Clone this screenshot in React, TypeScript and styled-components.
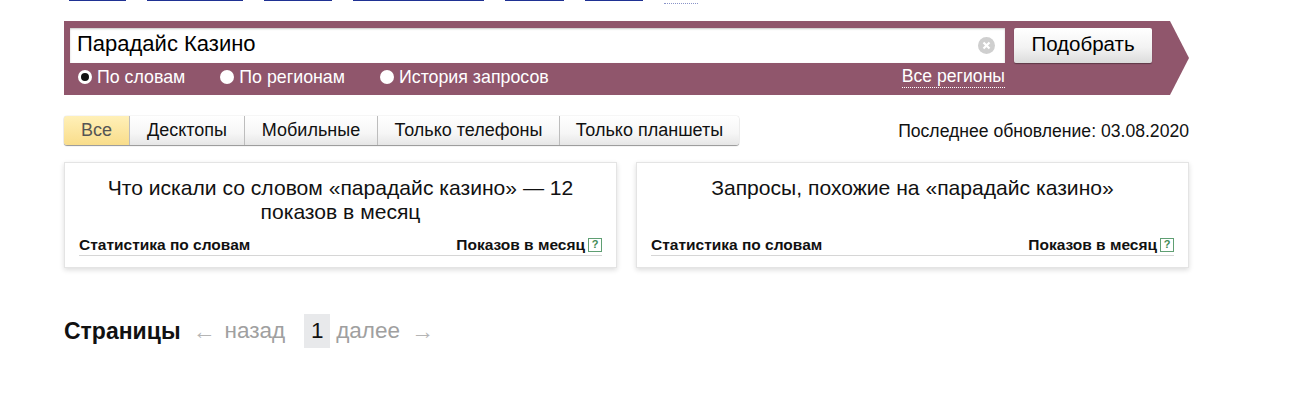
import styled, { createGlobalStyle } from 'styled-components';

const GlobalStyle = createGlobalStyle`
  html, body {
    margin: 0;
    padding: 0;
    background: #fff;
    overflow: hidden;
  }

  body {
    font-family: 'Liberation Sans', Arial, sans-serif;
    color: #000;
  }
`;

const Page = styled.div`
  width: 1125px;
  padding-left: 64px;
`;

const TopNav = styled.nav`
  height: 5px;
  padding-left: 5px;
  display: flex;
  align-items: flex-start;
  gap: 21px;
  overflow: hidden;
`;

const TopLink = styled.a<{ $width: number; $dotted?: boolean }>`
  flex: none;
  width: ${(p) => p.$width}px;
  margin-top: ${(p) => (p.$dotted ? 3 : 0)}px;
  border-bottom: 1px ${(p) => (p.$dotted ? 'dotted #8a94c8' : 'solid #1f3193')};
`;

const SearchBand = styled.form`
  margin-top: 16px;
  height: 74px;
  box-sizing: border-box;
  padding: 7px 37px 0 6px;
  background: #90566c;
  clip-path: polygon(0 0, 1106px 0, 1125px 37px, 1106px 100%, 0 100%);
  display: grid;
  grid-template-columns: 935px 138px;
  grid-template-rows: 35px 1fr;
  column-gap: 9px;
`;

const QueryBox = styled.div`
  background: #fff;
  display: flex;
  align-items: center;
  justify-content: space-between;
  padding: 0 10px 3px 7px;
  box-shadow: inset 0 1px 2px rgba(0, 0, 0, 0.22);
  font-size: 22px;
`;

const ClearIcon = styled.svg`
  width: 17px;
  height: 17px;
  flex: none;
  margin-top: 3px;
`;

const SubmitButton = styled.button`
  border: 0;
  padding: 0 0 4px;
  border-radius: 2px;
  background: linear-gradient(#fff, #f3f3f3 55%, #dcdcdc);
  box-shadow: 0 1px 1px rgba(0, 0, 0, 0.35);
  font: 20.5px 'Liberation Sans', Arial, sans-serif;
  color: #000;
`;

const SearchOptions = styled.div`
  display: flex;
  align-items: center;
  justify-content: space-between;
  padding: 0 0 4px 8px;
`;

const RadioGroup = styled.div`
  display: flex;
  gap: 35px;
`;

const RadioOption = styled.label`
  display: flex;
  align-items: center;
  gap: 5px;
  font-size: 17.8px;
  color: #fff;
`;

const RadioDot = styled.span<{ $checked?: boolean }>`
  width: 14px;
  height: 14px;
  box-sizing: border-box;
  border-radius: 50%;
  background: ${(p) => (p.$checked ? '#111' : '#fff')};
  border: ${(p) => (p.$checked ? '3.5px solid #fff' : '0')};
`;

const RegionsLink = styled.a`
  font-size: 17.6px;
  line-height: 21px;
  color: #fff;
  border-bottom: 1px dotted #fff;
`;

const TabsRow = styled.div`
  margin-top: 21px;
  display: flex;
  align-items: center;
  justify-content: space-between;
`;

const Tabs = styled.div`
  display: flex;
  height: 29px;
  border-radius: 3px;
  box-shadow: 0 1px 1px rgba(0, 0, 0, 0.4), 0 0 1px rgba(0, 0, 0, 0.35);
`;

const Tab = styled.div<{ $active?: boolean; $width: number }>`
  width: ${(p) => p.$width}px;
  box-sizing: border-box;
  display: flex;
  align-items: center;
  justify-content: center;
  font-size: 18px;
  color: ${(p) => (p.$active ? '#555' : '#111')};
  background: ${(p) =>
    p.$active
      ? 'linear-gradient(#fff0b8, #f9dd8b)'
      : 'linear-gradient(#fff, #f6f6f6 60%, #e6e6e6)'};
  border-left: ${(p) => (p.$active ? '0' : '1px solid #bdbdbd')};
  border-radius: ${(p) => (p.$active ? '3px 0 0 3px' : '0')};

  &:last-child {
    border-radius: 0 3px 3px 0;
  }
`;

const UpdatedAt = styled.div`
  padding-top: 2px;
  font-size: 17.6px;
  color: #111;
`;

const Cards = styled.div`
  margin-top: 17px;
  display: grid;
  grid-template-columns: 553px 553px;
  column-gap: 19px;
`;

const Card = styled.section`
  height: 106px;
  box-sizing: border-box;
  padding: 13px 14px 11px;
  display: flex;
  flex-direction: column;
  border: 1px solid #e4e4e4;
  box-shadow: 0 2px 5px rgba(0, 0, 0, 0.14);
`;

const CardTitle = styled.h2`
  flex: 1;
  margin: 0;
  padding: 0 24px;
  text-align: center;
  font-size: 21.1px;
  font-weight: 400;
  line-height: 24px;
  color: #111;
`;

const CardHead = styled.div`
  display: flex;
  align-items: center;
  justify-content: space-between;
  height: 19px;
  padding: 0 0 1px 0;
  border-bottom: 1px solid #d6d6d6;
  font-size: 15.5px;
  font-weight: 700;
  color: #111;
`;

const CountLabel = styled.span`
  display: flex;
  align-items: center;
  gap: 3px;
`;

const HelpBadge = styled.span`
  width: 14px;
  height: 14px;
  box-sizing: border-box;
  display: flex;
  align-items: center;
  justify-content: center;
  border: 1px solid #5f9f73;
  font-size: 11px;
  line-height: 1;
  color: #3f8a55;
`;

const Pager = styled.div`
  margin-top: 46px;
  display: flex;
  align-items: center;
  height: 34px;
  font-size: 22.5px;
  color: #a0a0a0;
`;

const PagerTitle = styled.strong`
  font-size: 23px;
  color: #111;
  margin-right: 12px;
`;

const PagerArrow = styled.span`
  font-size: 23px;
  color: #b5b5b5;
`;

const PagerLabel = styled.span<{ $left: number; $right: number }>`
  margin: 0 ${(p) => p.$right}px 0 ${(p) => p.$left}px;
`;

const CurrentPage = styled.span`
  width: 26px;
  height: 34px;
  display: flex;
  align-items: center;
  justify-content: center;
  background: #e8e9eb;
  color: #111;
`;

const topLinks = [
  { width: 57 },
  { width: 96 },
  { width: 68 },
  { width: 131 },
  { width: 59 },
  { width: 58 },
  { width: 34, dotted: true },
];

const options = ['По словам', 'По регионам', 'История запросов'];

const tabs = [
  { label: 'Все', width: 65 },
  { label: 'Десктопы', width: 115 },
  { label: 'Мобильные', width: 133 },
  { label: 'Только телефоны', width: 182 },
  { label: 'Только планшеты', width: 180 },
];

function StatCard({ title }: { title: string }) {
  return (
    <Card>
      <CardTitle>{title}</CardTitle>
      <CardHead>
        <span>Статистика по словам</span>
        <CountLabel>
          Показов в месяц
          <HelpBadge>?</HelpBadge>
        </CountLabel>
      </CardHead>
    </Card>
  );
}

export default function App() {
  return (
    <Page>
      <GlobalStyle />
      <TopNav>
        {topLinks.map((link, i) => (
          <TopLink key={i} $width={link.width} $dotted={link.dotted} />
        ))}
      </TopNav>

      <SearchBand>
        <QueryBox>
          Парадайс Казино
          <ClearIcon viewBox="0 0 17 17">
            <circle cx="8.5" cy="8.5" r="8.5" fill="#cfcfcf" />
            <path d="M5.5 5.5l6 6M11.5 5.5l-6 6" stroke="#fff" strokeWidth="2.2" />
          </ClearIcon>
        </QueryBox>
        <SubmitButton type="button">Подобрать</SubmitButton>
        <SearchOptions>
          <RadioGroup>
            {options.map((option, i) => (
              <RadioOption key={option}>
                <RadioDot $checked={i === 0} />
                {option}
              </RadioOption>
            ))}
          </RadioGroup>
          <RegionsLink>Все регионы</RegionsLink>
        </SearchOptions>
      </SearchBand>

      <TabsRow>
        <Tabs>
          {tabs.map((tab, i) => (
            <Tab key={tab.label} $active={i === 0} $width={tab.width}>
              {tab.label}
            </Tab>
          ))}
        </Tabs>
        <UpdatedAt>Последнее обновление: 03.08.2020</UpdatedAt>
      </TabsRow>

      <Cards>
        <StatCard title="Что искали со словом «парадайс казино» — 12 показов в месяц" />
        <StatCard title="Запросы, похожие на «парадайс казино»" />
      </Cards>

      <Pager>
        <PagerTitle>Страницы</PagerTitle>
        <PagerArrow>←</PagerArrow>
        <PagerLabel $left={9} $right={19}>назад</PagerLabel>
        <CurrentPage>1</CurrentPage>
        <PagerLabel $left={6} $right={11}>далее</PagerLabel>
        <PagerArrow>→</PagerArrow>
      </Pager>
    </Page>
  );
}
